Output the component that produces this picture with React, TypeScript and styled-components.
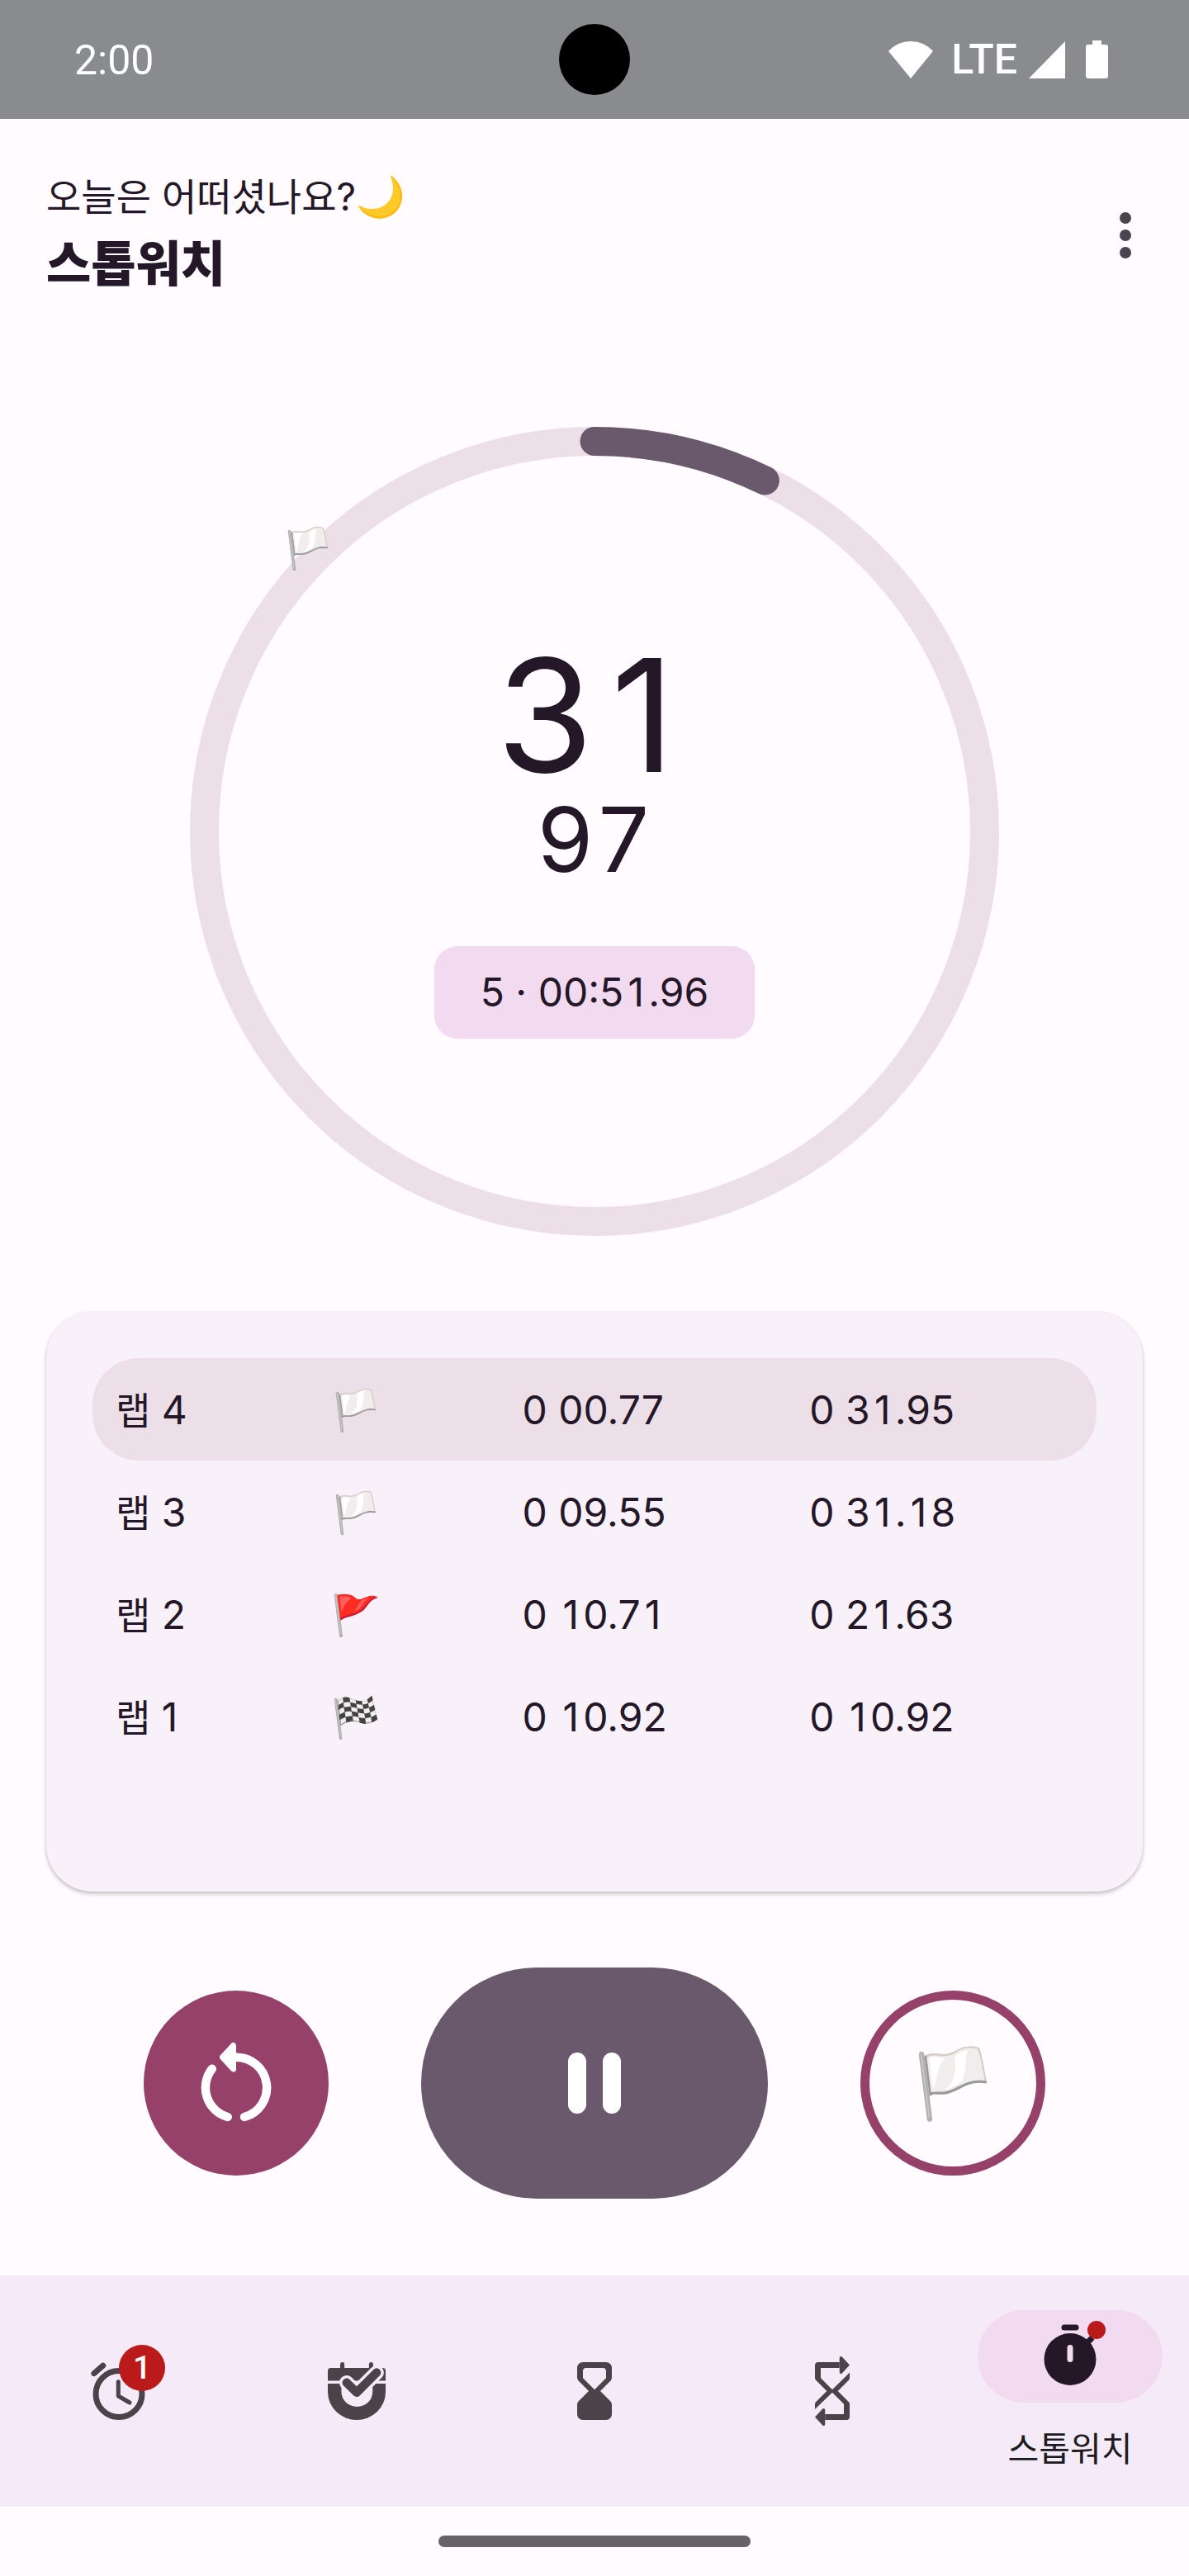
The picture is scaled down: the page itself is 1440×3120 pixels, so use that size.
import React from "react";
import styled, { createGlobalStyle } from "styled-components";

const color = {
  surface: "#fffbff",
  card: "#f8f1f9",
  nav: "#f5eaf7",
  track: "#ecdfe8",
  primary: "#6a596c",
  tertiary: "#95416a",
  accent: "#f2dbf0",
  ink: "#241727",
  icon: "#4a434a",
  error: "#ba1a1a",
};

const GlobalStyle = createGlobalStyle`
  * { box-sizing: border-box; }
  body {
    margin: 0;
    background: ${color.surface};
    color: ${color.ink};
    font-family: Inter, "Noto Sans CJK KR", "Noto Color Emoji", sans-serif;
  }
  button { font: inherit; color: inherit; border: 0; padding: 0; background: none; cursor: pointer; }
`;

const Screen = styled.div`
  display: flex;
  flex-direction: column;
  min-height: 100vh;
`;

const StatusBar = styled.div`
  display: grid;
  grid-template-columns: 1fr auto 1fr;
  align-items: center;
  height: 144px;
  background: #8a8b8e;
  color: #fff;
  font: 400 50px/60px Roboto, sans-serif;
`;

const Clock = styled.span`
  padding: 2px 0 0 90px;
`;

const Camera = styled.span`
  width: 86px;
  height: 86px;
  border-radius: 50%;
  background: #000;
`;

const StatusIcons = styled.div`
  display: flex;
  align-items: center;
  justify-content: flex-end;
  padding-right: 98px;
`;

const StatusGlyph = styled.svg<{ $w: number; $gap: number }>`
  width: ${(p) => p.$w}px;
  height: 46px;
  margin-left: ${(p) => p.$gap}px;
  fill: #fff;
`;

const NetworkLabel = styled.span`
  margin-left: 22px;
  font-weight: 500;
`;

const Header = styled.header`
  display: flex;
  align-items: center;
  justify-content: space-between;
  padding: 59px 56px;
`;

const Greeting = styled.p`
  margin: 0;
  font-size: 46px;
  line-height: 70px;
`;

const GreetingEmoji = styled.span`
  font-size: 48px;
`;

const Title = styled.h1`
  margin: 0;
  font-size: 59px;
  font-weight: 900;
  line-height: 93px;
`;

const MoreButton = styled.button`
  display: flex;
  flex-direction: column;
  align-items: center;
  gap: 7px;
  width: 42px;
`;

const Dot = styled.i`
  width: 14px;
  height: 14px;
  border-radius: 50%;
  background: #49454f;
`;

const Main = styled.main`
  display: flex;
  flex-direction: column;
  align-items: center;
  gap: 92px;
  padding: 92px 56px 93px;
`;

const Dial = styled.section`
  position: relative;
  display: grid;
  width: 980px;
  max-width: 100%;
  aspect-ratio: 1;
  place-items: center;
`;

const Ring = styled.svg`
  grid-area: 1 / 1;
  width: 100%;
  fill: none;
  stroke-width: 35;
`;

const RingFlag = styled.span`
  position: absolute;
  left: 14.6%;
  top: 15%;
  transform: translate(-50%, -50%);
  font-size: 48px;
  line-height: 56px;
`;

const Readout = styled.div`
  grid-area: 1 / 1;
  display: flex;
  flex-direction: column;
  align-items: center;
`;

const Seconds = styled.div`
  font-size: 190px;
  line-height: 220px;
`;

const Hundredths = styled.div`
  font-size: 109px;
  font-variant-numeric: tabular-nums;
  line-height: 80px;
`;

const TotalChip = styled.div`
  margin-top: 90px;
  padding: 0 56px;
  border-radius: 28px;
  background: ${color.accent};
  font-size: 48px;
  line-height: 112px;
`;

const OneCell = styled.span<{ $w: number }>`
  display: inline-block;
  width: ${(p) => p.$w}px;
  text-align: center;
`;

const LapCard = styled.section`
  width: 100%;
  min-height: 702px;
  padding: 56px;
  border-radius: 56px;
  background: ${color.card};
  box-shadow: 0 3px 5px rgba(0, 0, 0, 0.22), 0 0 3px rgba(0, 0, 0, 0.08);
`;

const LapTable = styled.table`
  width: 100%;
  border-collapse: collapse;
  table-layout: fixed;
  font-size: 48px;
  line-height: 60px;
  text-align: left;
`;

const LapRow = styled.tr<{ $active: boolean }>`
  height: 124px;
  > * {
    padding: 2px 0 0;
    font-weight: 400;
    background: ${(p) => (p.$active ? color.track : "transparent")};
  }
  > :first-child { padding-left: 28px; width: 23.8%; border-radius: 56px 0 0 56px; }
  > :nth-child(2) { width: 19%; }
  > :nth-child(3) { width: 28.6%; }
  > :last-child { border-radius: 0 56px 56px 0; }
`;

const LapWord = styled.span`
  font-size: 46px;
`;

const Controls = styled.div`
  display: flex;
  align-items: center;
  justify-content: center;
  gap: 112px;
`;

const RoundButton = styled.button<{ $outlined?: boolean }>`
  display: grid;
  place-items: center;
  width: 224px;
  height: 224px;
  border-radius: 50%;
  background: ${(p) => (p.$outlined ? "transparent" : color.tertiary)};
  border: ${(p) => (p.$outlined ? `11px solid ${color.tertiary}` : "0")};
  font-size: 82px;
  line-height: 96px;
`;

const PauseButton = styled.button`
  display: flex;
  align-items: center;
  justify-content: center;
  gap: 20px;
  width: 420px;
  height: 280px;
  border-radius: 140px;
  background: ${color.primary};
`;

const PauseBar = styled.i`
  width: 22px;
  height: 74px;
  border-radius: 11px;
  background: #fff;
`;

const ResetIcon = styled.svg`
  width: 112px;
  height: 112px;
`;

const NavBar = styled.nav`
  display: grid;
  grid-template-columns: repeat(5, 1fr);
  height: 280px;
  background: ${color.nav};
`;

const NavItem = styled.button`
  display: flex;
  flex-direction: column;
  align-items: center;
  justify-content: center;
  gap: 22px;
  color: ${color.icon};
`;

const NavPill = styled.span<{ $active?: boolean }>`
  display: grid;
  place-items: center;
  width: 224px;
  max-width: 100%;
  height: 112px;
  border-radius: 56px;
  background: ${(p) => (p.$active ? color.accent : "transparent")};
  color: ${(p) => (p.$active ? color.ink : color.icon)};
`;

const IconBox = styled.span`
  position: relative;
  width: 84px;
  height: 84px;
`;

const NavIcon = styled.svg`
  display: block;
  width: 84px;
  height: 84px;
  overflow: visible;
  fill: currentColor;
`;

const Badge = styled.span`
  position: absolute;
  left: 42px;
  top: -14px;
  width: 56px;
  height: 56px;
  border-radius: 50%;
  background: ${color.error};
  color: #fff;
  font: 500 39px/56px Roboto, sans-serif;
  text-align: center;
`;

const BadgeDot = styled.span`
  position: absolute;
  left: 63px;
  top: -1px;
  width: 22px;
  height: 22px;
  border-radius: 50%;
  background: ${color.error};
`;

const NavLabel = styled.span`
  color: #1d1b1e;
  font: 400 41px/62px "Noto Sans CJK KR", sans-serif;
`;

const GestureArea = styled.div`
  display: grid;
  place-items: center;
  height: 84px;
`;

const GestureBar = styled.span`
  width: 378px;
  height: 14px;
  border-radius: 7px;
  background: #656366;
`;

function Figures({ value, cell }: { value: string; cell: number }) {
  return (
    <>
      {value.split(/(1)/).map((part, i) =>
        part === "1" ? (
          <OneCell key={i} $w={cell}>
            1
          </OneCell>
        ) : (
          part
        )
      )}
    </>
  );
}

const laps = [
  { n: 4, flag: "🏳️", lap: "0 00.77", total: "0 31.95" },
  { n: 3, flag: "🏳️", lap: "0 09.55", total: "0 31.18" },
  { n: 2, flag: "🚩", lap: "0 10.71", total: "0 21.63" },
  { n: 1, flag: "🏁", lap: "0 10.92", total: "0 10.92" },
];

export default function App() {
  return (
    <Screen>
      <GlobalStyle />
      <StatusBar>
        <Clock>2:00</Clock>
        <Camera />
        <StatusIcons>
          <StatusGlyph $w={54} $gap={0} viewBox="0 0 54 46">
            <path d="M0 13Q11 1 27 1T54 13L27 46Z" />
          </StatusGlyph>
          <NetworkLabel>LTE</NetworkLabel>
          <StatusGlyph $w={44} $gap={14} viewBox="0 0 44 46">
            <path d="M44 1V46H0Z" />
          </StatusGlyph>
          <StatusGlyph $w={27} $gap={25} viewBox="0 0 27 46">
            <path d="M8 0h11v5h5q3 0 3 3v35q0 3-3 3H3q-3 0-3-3V8q0-3 3-3h5Z" />
          </StatusGlyph>
        </StatusIcons>
      </StatusBar>

      <Header>
        <div>
          <Greeting>
            오늘은 어떠셨나요?<GreetingEmoji>🌙</GreetingEmoji>
          </Greeting>
          <Title>스톱워치</Title>
        </div>
        <MoreButton aria-label="더보기">
          <Dot />
          <Dot />
          <Dot />
        </MoreButton>
      </Header>

      <Main>
        <Dial>
          <Ring viewBox="0 0 980 980" aria-hidden="true">
            <circle cx="490" cy="490" r="472.5" stroke={color.track} />
            <path d="M490 17.5A472.5 472.5 0 0 1 696.4 65" stroke={color.primary} strokeLinecap="round" />
          </Ring>
          <RingFlag>🏳️</RingFlag>
          <Readout>
            <Seconds>
              <Figures value="31" cell={120} />
            </Seconds>
            <Hundredths>97</Hundredths>
            <TotalChip>
              <Figures value="5 · 00:51.96" cell={30} />
            </TotalChip>
          </Readout>
        </Dial>

        <LapCard>
          <LapTable aria-label="랩 기록">
            <tbody>
              {laps.map((l) => (
                <LapRow key={l.n} $active={l.n === 4}>
                  <th scope="row">
                    <LapWord>랩</LapWord> {l.n}
                  </th>
                  <td>{l.flag}</td>
                  <td>
                    <Figures value={l.lap} cell={30} />
                  </td>
                  <td>
                    <Figures value={l.total} cell={30} />
                  </td>
                </LapRow>
              ))}
            </tbody>
          </LapTable>
        </LapCard>

        <Controls>
          <RoundButton aria-label="초기화">
            <ResetIcon viewBox="56 56 112 112" fill="none" stroke="#fff" strokeWidth="10.5" strokeLinecap="round">
              <path d="M112 80.7A36.8 36.8 0 0 1 122 153" />
              <path d="M101.7 153A36.8 36.8 0 0 1 82.8 94.8" />
              <path d="M108.500 66.500V95L95.500 80.700Z" fill="#fff" strokeWidth="7" strokeLinejoin="round" />
            </ResetIcon>
          </RoundButton>
          <PauseButton aria-label="일시정지">
            <PauseBar />
            <PauseBar />
          </PauseButton>
          <RoundButton $outlined aria-label="랩">🏳️</RoundButton>
        </Controls>
      </Main>

      <NavBar>
        <NavItem aria-label="알람">
          <NavPill>
            <IconBox>
              <NavIcon viewBox="0 0 24 24">
                <g fill="none" stroke="currentColor" strokeLinecap="round" strokeLinejoin="round">
                  <circle cx="12" cy="13" r="8" strokeWidth="2" />
                  <path d="M3.400 5.900L6.500 3.200" strokeWidth="2" />
                  <path d="M11.800 8.800V13.700L15.700 16" strokeWidth="1.45" />
                </g>
              </NavIcon>
              <Badge>1</Badge>
            </IconBox>
          </NavPill>
        </NavItem>
        <NavItem aria-label="루틴">
          <NavPill>
            <IconBox>
              <NavIcon viewBox="0 0 24 24">
                <path d="M6.300 4V2.750a.7.7 0 0 1 1.450 0V4h8.500V2.750a.7.7 0 0 1 1.450 0V4H21a1 1 0 0 1 1 1v3.400H2V5a1 1 0 0 1 1-1Z" />
                <path d="M2 9.400H6.200Q6.700 10 6.700 10.500V12.300a5.400 5.100 0 0 0 10.800 0V10.500L18.600 9.400H22V12.300a10 9.700 0 0 1-20 0Z" />
                <g fill="none" strokeLinecap="round" strokeLinejoin="round">
                  <path d="M8.500 9.100L12 12.500L18.900 5.600" stroke={color.nav} strokeWidth="5" />
                  <path d="M8.500 9.100L12 12.500L18.900 5.600" stroke="currentColor" strokeWidth="3" />
                </g>
              </NavIcon>
            </IconBox>
          </NavPill>
        </NavItem>
        <NavItem aria-label="타이머">
          <NavPill>
            <IconBox>
              <NavIcon viewBox="0 0 24 24">
                <path d="M8 2c-1.100 0-2 .9-2 2v3.170c0 .53.210 1.040.590 1.420L10 12l-3.420 3.420c-.37.380-.58.890-.58 1.420V20c0 1.100.9 2 2 2h8c1.100 0 2-.9 2-2v-3.160c0-.53-.21-1.040-.58-1.410L14 12l3.410-3.400c.380-.38.590-.89.590-1.420V4c0-1.100-.9-2-2-2H8zm8 5.500-4 4-4-4V5c0-.55.450-1 1-1h6c.55 0 1 .45 1 1v2.500z" />
              </NavIcon>
            </IconBox>
          </NavPill>
        </NavItem>
        <NavItem aria-label="반복 타이머">
          <NavPill>
            <IconBox>
              <NavIcon viewBox="0 0 24 24">
                <path d="M14.500 2H7c-.55 0-1 .45-1 1v4.500q0 .4.300.7L10.100 12 6.300 15.800q-.3.3-.3.700v1.800L12 12.500l4 4V20H9.500v2H17c.55 0 1-.45 1-1v-4.500q0-.4-.3-.7L13.900 12l3.800-3.800q.3-.3.300-.7V5.600L12 11.500l-4-4V4h6.500Z" />
                <path d="M14.500.5c0-.45.540-.67.850-.35L18 3l-2.650 2.850c-.31.320-.85.100-.85-.35ZM9.500 18.500c0-.45-.54-.67-.85-.35L6 21l2.650 2.850c.310.320.850.100.850-.35Z" />
              </NavIcon>
            </IconBox>
          </NavPill>
        </NavItem>
        <NavItem aria-current="page">
          <NavPill $active>
            <IconBox>
              <NavIcon viewBox="0 0 24 24">
                <circle cx="12" cy="13" r="9" />
                <rect x="9" y="1" width="6" height="2" rx="1" />
                <path d="M18 7.200L19.700 5.500" stroke="currentColor" strokeWidth="2" />
                <rect x="11" y="8" width="2" height="6" rx="1" fill={color.accent} />
              </NavIcon>
              <BadgeDot />
            </IconBox>
          </NavPill>
          <NavLabel>스톱워치</NavLabel>
        </NavItem>
      </NavBar>

      <GestureArea>
        <GestureBar />
      </GestureArea>
    </Screen>
  );
}
